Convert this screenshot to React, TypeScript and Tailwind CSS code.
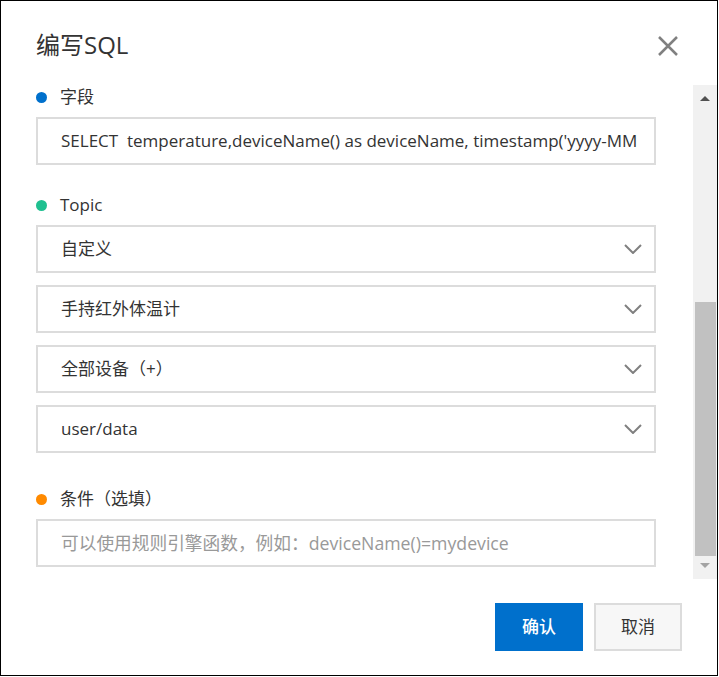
// App.tsx
const fontStack = "font-['Open_Sans','Noto_Sans_CJK_SC',sans-serif]";

function Chevron() {
  return (
    <svg width="18" height="10" viewBox="0 0 18 10" fill="none" className="shrink-0">
      <path d="M1 1 L9 9 L17 1" stroke="#808080" strokeWidth="2" />
    </svg>
  );
}

function Label({ color, text }: { color: string; text: string }) {
  return (
    <div className="flex h-[24px] items-center">
      <span className={`h-[11px] w-[11px] rounded-full ${color}`} />
      <span className="ml-[13px] text-[17px] leading-[24px] text-[#333]">{text}</span>
    </div>
  );
}

function SelectRow({ value }: { value: string }) {
  return (
    <div className="flex h-[48px] items-center justify-between border-2 border-[#dcdcdc] pl-[23px] pr-[12px]">
      <span className="text-[17px] text-[#333]">{value}</span>
      <Chevron />
    </div>
  );
}

export default function App() {
  return (
    <div className={`flex h-[676px] w-[718px] flex-col border border-black bg-white ${fontStack}`}>
      {/* Header */}
      <div className="flex h-[84px] shrink-0 items-start justify-between pl-[35px] pr-[39px] pt-[28px]">
        <h1 className="text-[24px] leading-[32px] text-[#333]">编写SQL</h1>
        <svg width="20" height="20" viewBox="0 0 20 20" className="mt-[7px]">
          <path d="M1 1 L19 19 M19 1 L1 19" stroke="#808080" strokeWidth="2.5" />
        </svg>
      </div>

      {/* Body */}
      <div className="flex h-[494px] shrink-0">
        <div className="ml-[35px] w-[620px] shrink-0 overflow-hidden">
          <Label color="bg-[#0070cc]" text="字段" />
          <div className="mt-[8px] flex h-[48px] items-center border-2 border-[#dcdcdc] pl-[23px] pr-[17px]">
            <div className="overflow-hidden whitespace-pre text-[17px] text-[#333]">
              SELECT  temperature,deviceName() as deviceName, timestamp('yyyy-MM-dd HH:mm:ss') as time
            </div>
          </div>

          <div className="mt-[28px]">
            <Label color="bg-[#1fc090]" text="Topic" />
          </div>
          <div className="mt-[8px] flex flex-col gap-[12px]">
            <SelectRow value="自定义" />
            <SelectRow value="手持红外体温计" />
            <SelectRow value="全部设备（+）" />
            <SelectRow value="user/data" />
          </div>

          <div className="mt-[34px]">
            <Label color="bg-[#ff8a00]" text="条件（选填）" />
          </div>
          <div className="mt-[8px] flex h-[48px] items-center border-2 border-[#dcdcdc] pl-[23px] pr-[17px]">
            <span className="whitespace-nowrap text-[17.7px] text-[#999]">
              可以使用规则引擎函数，例如：deviceName()=mydevice
            </span>
          </div>
        </div>

        {/* Scrollbar */}
        <div className="ml-[37px] flex w-[24px] shrink-0 flex-col items-center bg-[#f1f1f1]">
          <div className="h-[11px]" />
          <svg width="10" height="5" viewBox="0 0 10 5" className="block">
            <polygon points="0,5 5,0 10,5" fill="#505050" />
          </svg>
          <div className="h-[201px]" />
          <div className="h-[254px] w-[21px] bg-[#c1c1c1]" />
          <div className="h-[7px]" />
          <svg width="10" height="5" viewBox="0 0 10 5" className="block">
            <polygon points="0,0 10,0 5,5" fill="#a3a3a3" />
          </svg>
        </div>
      </div>

      {/* Footer */}
      <div className="flex flex-1 items-start justify-end gap-[11px] pr-[35px] pt-[24px]">
        <button className="h-[48px] w-[88px] bg-[#0070cc] text-[17px] font-medium text-white">
          确认
        </button>
        <button className="h-[48px] w-[88px] border-2 border-[#dcdcdc] bg-[#f7f7f7] text-[17px] text-[#333]">
          取消
        </button>
      </div>
    </div>
  );
}
